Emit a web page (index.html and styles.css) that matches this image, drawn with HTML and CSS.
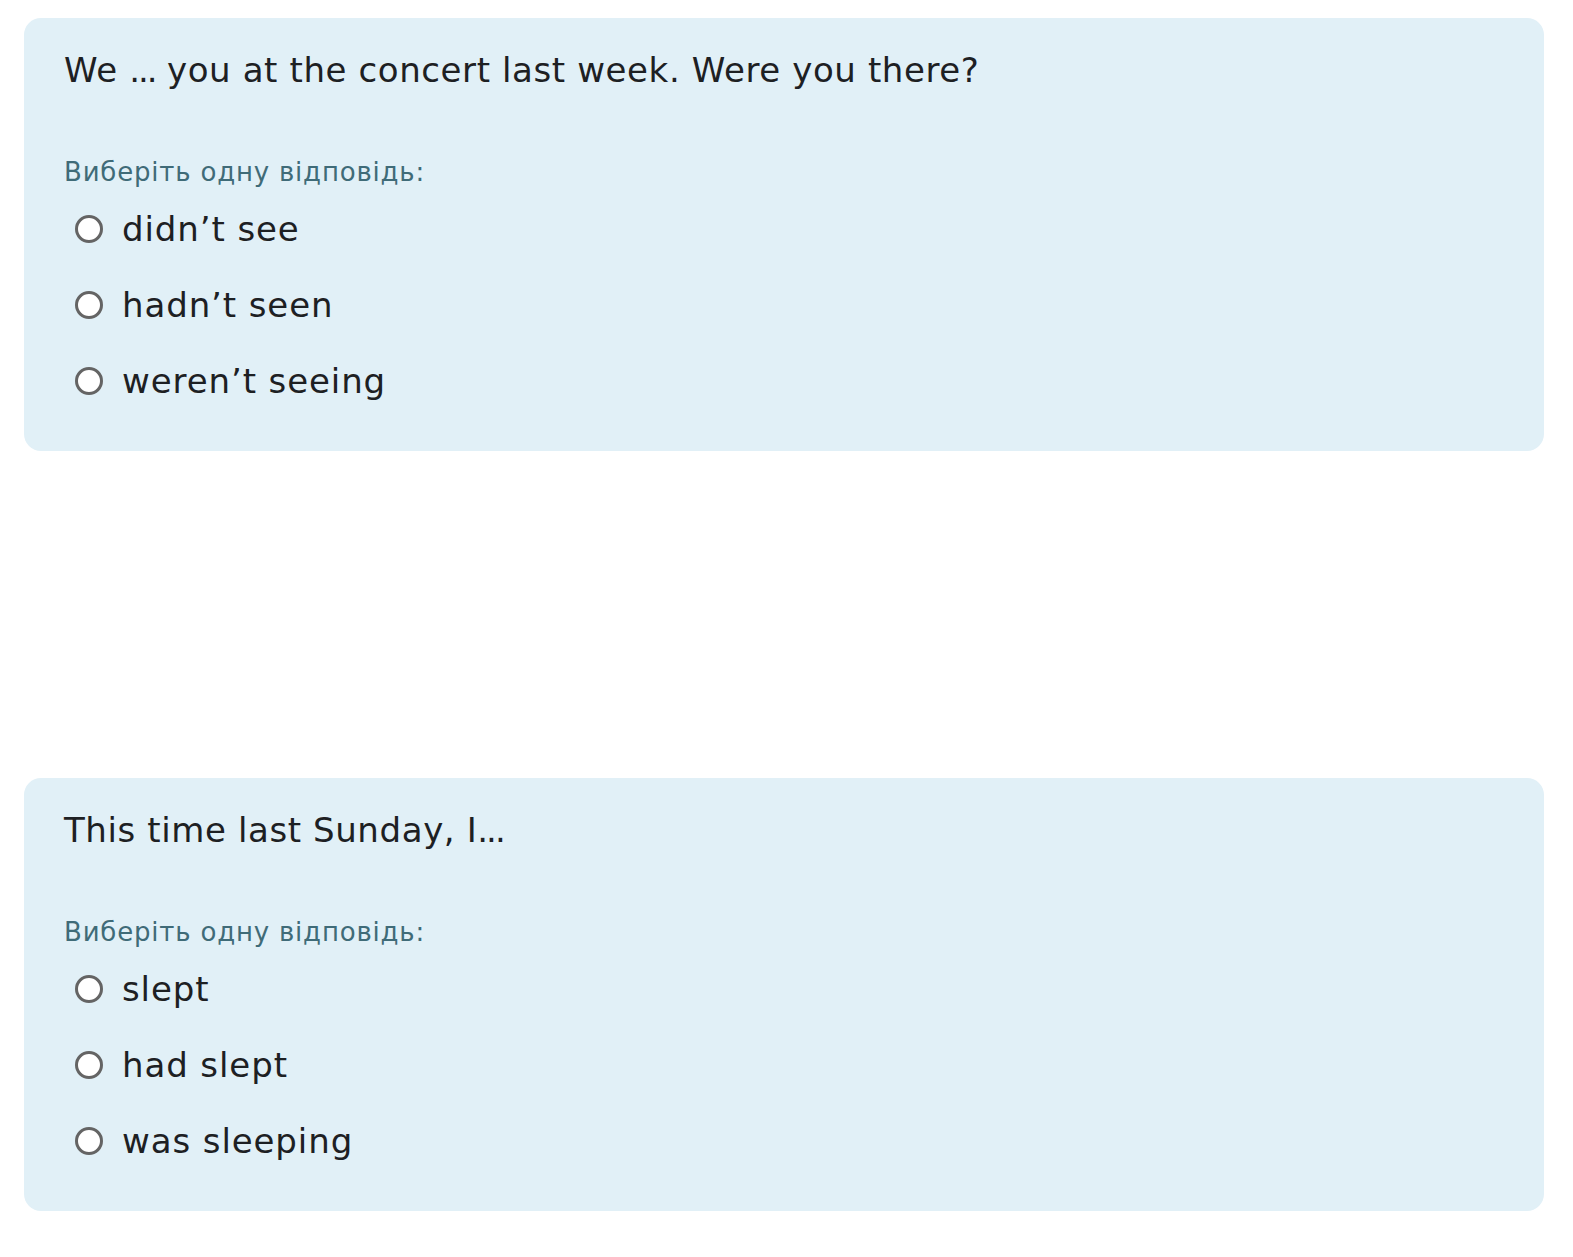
FILE: index.html
```html
<!DOCTYPE html>
<html lang="uk">
<head>
<meta charset="utf-8">
<title>Quiz</title>
<link rel="stylesheet" href="styles.css">
</head>
<body>
<main class="page">
  <section class="card">
    <p class="question">We <span class="dots">...</span> you at the concert last week. Were you there?</p>
    <p class="prompt">Виберіть одну відповідь:</p>
    <div class="answers">
      <label class="answer"><span class="radio"></span><span class="text">didn’t see</span></label>
      <label class="answer"><span class="radio"></span><span class="text">hadn’t seen</span></label>
      <label class="answer"><span class="radio"></span><span class="text">weren’t seeing</span></label>
    </div>
  </section>
  <section class="card">
    <p class="question">This time last Sunday, I<span class="dots">...</span></p>
    <p class="prompt">Виберіть одну відповідь:</p>
    <div class="answers">
      <label class="answer"><span class="radio"></span><span class="text">slept</span></label>
      <label class="answer"><span class="radio"></span><span class="text">had slept</span></label>
      <label class="answer"><span class="radio"></span><span class="text">was sleeping</span></label>
    </div>
  </section>
</main>
</body>
</html>
```
FILE: styles.css
```css
html, body {
  margin: 0;
  padding: 0;
  background: #ffffff;
}
body {
  font-family: "DejaVu Sans", "Noto Sans", sans-serif;
  color: #1d2023;
}
.page {
  display: flex;
  flex-direction: column;
  gap: 327px;
  padding: 18px 29px 0 24px;
}
.card {
  background: #e1f0f7;
  border-radius: 17px;
  height: 433px;
  box-sizing: border-box;
  padding: 32px 40px 0 40px;
}
.question {
  margin: 0;
  font-size: 34px;
  line-height: 40px;
  letter-spacing: 0.6px;
}
.dots {
  letter-spacing: -2px;
}
.prompt {
  margin: 67px 0 0 0;
  font-size: 26px;
  line-height: 30px;
  letter-spacing: 0.8px;
  color: #3f6b78;
}
.answers {
  display: flex;
  flex-direction: column;
  margin-top: 4px;
}
.answer {
  display: flex;
  align-items: center;
  height: 76px;
  padding-left: 11px;
}
.radio {
  width: 22px;
  height: 22px;
  border: 3px solid #646464;
  border-radius: 50%;
  background: #ffffff;
  flex: none;
  margin-right: 19px;
}
.text {
  font-size: 34px;
  line-height: 40px;
  letter-spacing: 0.9px;
}
```
